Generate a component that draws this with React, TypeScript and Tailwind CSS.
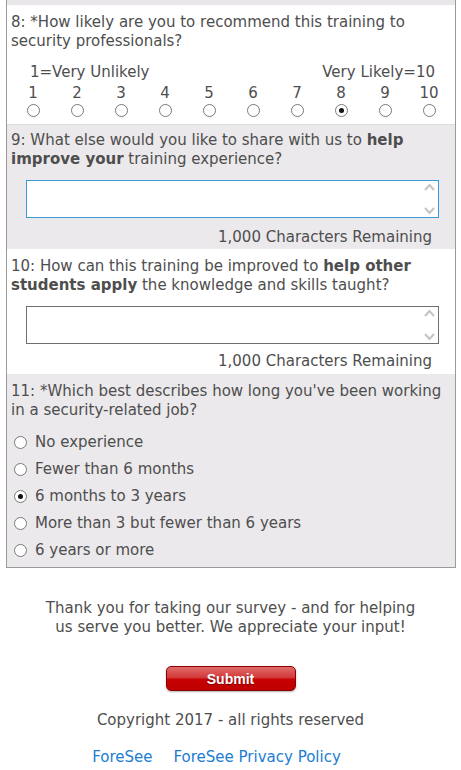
import React from 'react';

const font = { fontFamily: '"DejaVu Sans", Verdana, sans-serif' };

const Radio = ({ checked = false }: { checked?: boolean }) => (
  <span className="inline-flex items-center justify-center w-[13px] h-[13px] rounded-full border border-[#7a7a7a] bg-white">
    {checked && <span className="w-[5px] h-[5px] rounded-full bg-[#111]" />}
  </span>
);

const TextBox = ({ focused = false }: { focused?: boolean }) => (
  <div
    className={`ml-[15px] mr-[16px] h-[38px] flex justify-end bg-white border ${
      focused ? 'border-[#3a9ad9]' : 'border-[#6f6f6f]'
    }`}
  >
    <div className="w-[17px] flex flex-col items-center justify-between py-[2px] text-[#c4c4c4]">
      <svg width="11" height="8" viewBox="0 0 11 8">
        <path d="M1 7 L5.5 2 L10 7" fill="none" stroke="currentColor" strokeWidth="2" />
      </svg>
      <svg width="11" height="8" viewBox="0 0 11 8">
        <path d="M1 1 L5.5 6 L10 1" fill="none" stroke="currentColor" strokeWidth="2" />
      </svg>
    </div>
  </div>
);

const Remaining = ({ top }: { top: string }) => (
  <div className={`text-right pr-[23px] leading-[19px] ${top}`}>1,000 Characters Remaining</div>
);

export default function App() {
  const scale = [1, 2, 3, 4, 5, 6, 7, 8, 9, 10];
  const options = [
    'No experience',
    'Fewer than 6 months',
    '6 months to 3 years',
    'More than 3 but fewer than 6 years',
    '6 years or more',
  ];

  return (
    <div className="w-[461px] min-h-[770px] bg-white text-[#4e4e4e] text-[15px]" style={font}>
      <div className="ml-[6px] w-[450px] border-l border-r border-b border-[#9a9a9a]">
        <div className="h-[5px] bg-[#e9e7ea]" />

        {/* Q8 */}
        <div className="bg-white pl-[4px] pt-[8px] h-[120px] border-b border-[#dcdcdc]">
          <div className="leading-[19px]">
            8: *How likely are you to recommend this training to security professionals?
          </div>
          <div className="flex justify-between pl-[19px] pr-[20px] mt-[12px] leading-[19px]">
            <span>1=Very Unlikely</span>
            <span>Very Likely=10</span>
          </div>
          <div className="grid grid-cols-10 w-[440px]">
            {scale.map((n) => (
              <div key={n} className="flex flex-col items-center">
                <span className="leading-[19px] mt-[2px] mb-[1px]">{n}</span>
                <Radio checked={n === 8} />
              </div>
            ))}
          </div>
        </div>

        {/* Q9 */}
        <div className="bg-[#ebe9eb] pl-[4px] pt-[6px] h-[124px]">
          <div className="leading-[19px] pr-[10px]">
            9: What else would you like to share with us to <b>help improve your</b> training experience?
          </div>
          <div className="mt-[11px]">
            <TextBox focused />
          </div>
          <Remaining top="mt-[10px]" />
        </div>

        {/* Q10 */}
        <div className="bg-white pl-[4px] pt-[8px] h-[125px]">
          <div className="leading-[19px] pr-[10px]">
            10: How can this training be improved to <b>help other students apply</b> the knowledge and skills
            taught?
          </div>
          <div className="mt-[11px]">
            <TextBox />
          </div>
          <Remaining top="mt-[8px]" />
        </div>

        {/* Q11 */}
        <div className="bg-[#ebe9eb] pl-[4px] pt-[8px] pb-[7px]">
          <div className="leading-[19px] pr-[6px]">
            11: *Which best describes how long you've been working in a security-related job?
          </div>
          <div className="mt-[13px] flex flex-col gap-[8px]">
            {options.map((o, i) => (
              <div key={o} className="flex items-center gap-[8px] pl-[3px] leading-[19px]">
                <Radio checked={i === 2} />
                <span>{o}</span>
              </div>
            ))}
          </div>
        </div>
      </div>

      {/* Footer */}
      <div className="flex flex-col items-center pt-[31px]">
        <p className="text-center leading-[19px] w-[390px]">
          Thank you for taking our survey - and for helping us serve you better. We appreciate your input!
        </p>
        <button
          className="mt-[29px] w-[130px] h-[25px] rounded-[5px] border border-[#8a0000] text-white font-bold text-[14px] leading-none [text-shadow:0_1px_1px_rgba(0,0,0,0.4)] shadow-[0_1px_2px_rgba(0,0,0,0.3)] bg-[linear-gradient(to_bottom,#e06a6a_0%,#d33b3b_45%,#c70000_55%,#c00000_100%)]"
          style={{ fontFamily: '"Liberation Sans", Arial, sans-serif' }}
        >
          Submit
        </button>
        <div className="mt-[20px] leading-[19px]">Copyright 2017 - all rights reserved</div>
        <div className="mt-[18px] mr-[28px] flex gap-[21px] text-[#1b7dd1] leading-[19px]">
          <a href="#">ForeSee</a>
          <a href="#">ForeSee Privacy Policy</a>
        </div>
      </div>
    </div>
  );
}
